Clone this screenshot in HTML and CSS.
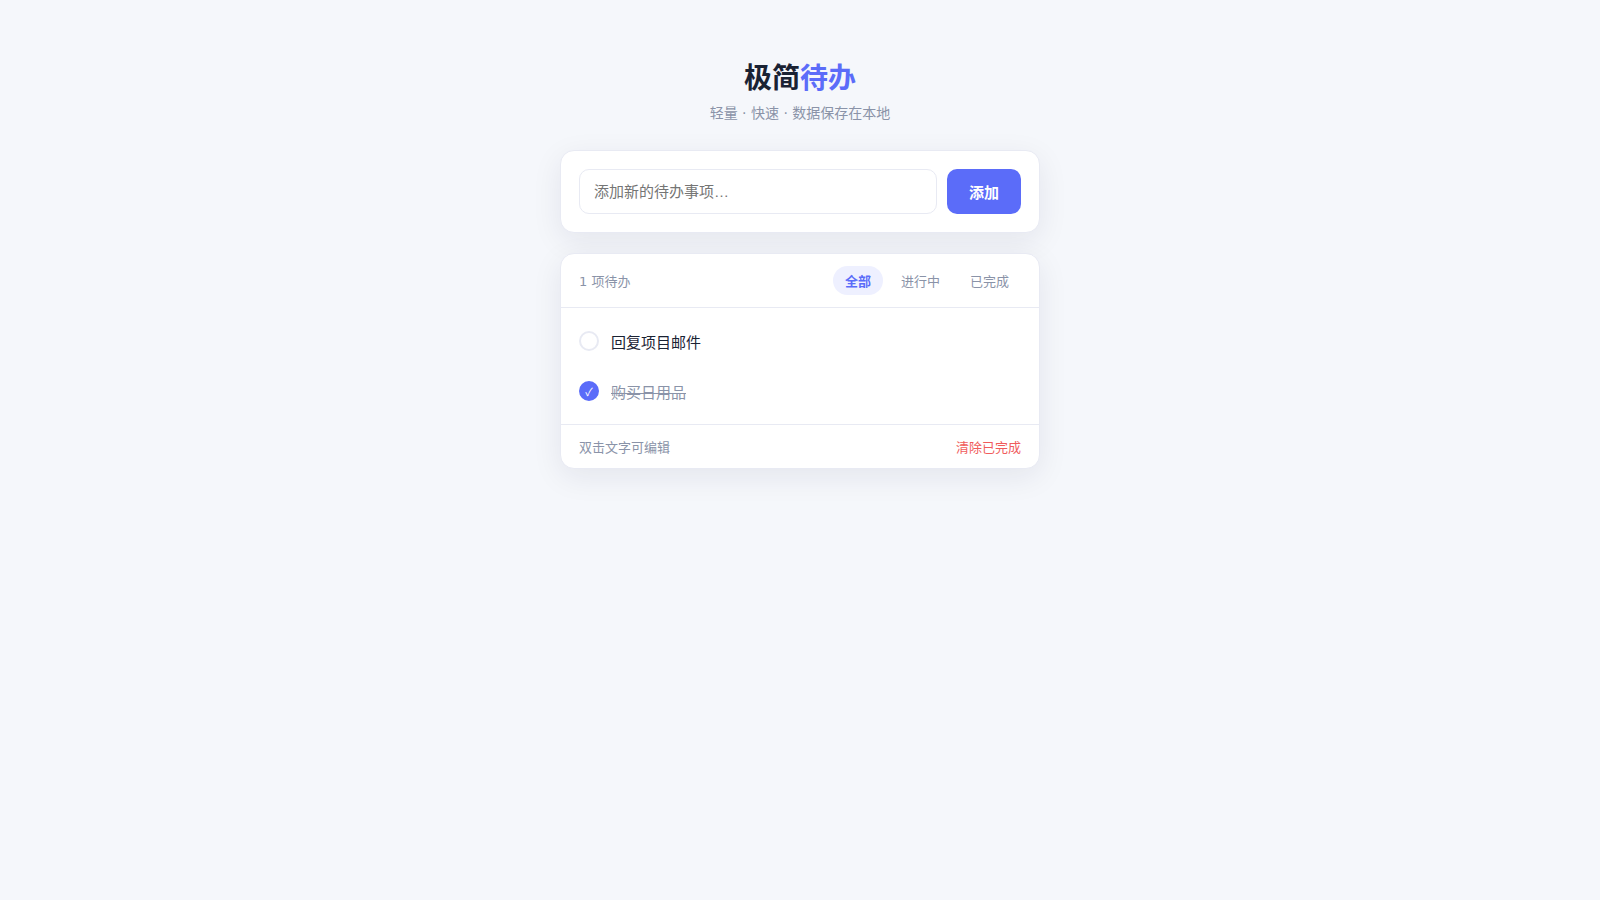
FILE: index.html
```html
<!DOCTYPE html>
<html lang="zh-CN">
<head>
<meta charset="UTF-8">
<meta name="viewport" content="width=device-width, initial-scale=1">
<title>极简待办</title>
<link rel="stylesheet" href="styles.css">
</head>
<body>
<main class="app">
  <header class="header">
    <h1 class="title">极简<span class="accent">待办</span></h1>
    <p class="subtitle">轻量 · 快速 · 数据保存在本地</p>
  </header>

  <form class="card add-form">
    <input class="add-input" type="text" placeholder="添加新的待办事项…" aria-label="添加新的待办事项">
    <button class="add-button" type="button">添加</button>
  </form>

  <section class="card">
    <div class="toolbar">
      <span>1 项待办</span>
      <div class="filters">
        <button class="filter active" type="button">全部</button>
        <button class="filter" type="button">进行中</button>
        <button class="filter" type="button">已完成</button>
      </div>
    </div>
    <ul class="list">
      <li class="item">
        <input class="check" type="checkbox" id="todo-1">
        <label class="text" for="todo-1">回复项目邮件</label>
      </li>
      <li class="item">
        <input class="check" type="checkbox" id="todo-2" checked>
        <label class="text" for="todo-2">购买日用品</label>
      </li>
    </ul>
    <footer class="footer">
      <span>双击文字可编辑</span>
      <button class="clear" type="button">清除已完成</button>
    </footer>
  </section>
</main>
</body>
</html>
```
FILE: styles.css
```css
:root {
  --bg: #f5f7fb;
  --card: #ffffff;
  --text: #1a2233;
  --muted: #8a93a8;
  --primary: #5b6cf9;
  --primary-soft: #eef0ff;
  --line: #e8eaf3;
  --danger: #f05c5c;
}

* {
  box-sizing: border-box;
  margin: 0;
  padding: 0;
}

body {
  min-height: 100vh;
  padding: 56px 16px;
  background: var(--bg);
  color: var(--text);
  font-family: "DejaVu Sans", "Noto Sans CJK SC", sans-serif;
}

button,
input {
  font-family: inherit;
}

button {
  border: none;
  background: none;
  cursor: pointer;
}

.app {
  max-width: 480px;
  margin: 0 auto;
}

.header {
  margin-bottom: 28px;
  text-align: center;
}

.title {
  font-size: 28px;
  font-weight: 700;
}

.accent {
  color: var(--primary);
}

.subtitle {
  margin-top: 6px;
  color: var(--muted);
  font-size: 14px;
}

.card {
  background: var(--card);
  border: 1px solid var(--line);
  border-radius: 14px;
  box-shadow: 0 8px 30px rgba(30, 30, 60, 0.08);
}

.add-form {
  display: flex;
  gap: 10px;
  margin-bottom: 20px;
  padding: 18px;
}

.add-input {
  flex: 1;
  min-width: 0;
  height: 45px;
  padding: 0 14px;
  border: 1px solid var(--line);
  border-radius: 10px;
  color: var(--text);
  font-family: "Liberation Sans", "Noto Sans CJK SC", sans-serif;
  font-size: 15px;
  outline: none;
}

.add-button {
  padding: 0 22px;
  border-radius: 10px;
  background: var(--primary);
  color: #fff;
  font-size: 15px;
  font-weight: 600;
}

.toolbar {
  display: flex;
  align-items: center;
  justify-content: space-between;
  padding: 12px 18px;
  border-bottom: 1px solid var(--line);
  color: var(--muted);
  font-size: 13px;
}

.filters {
  display: flex;
  gap: 6px;
}

.filter {
  padding: 5px 12px;
  border-radius: 20px;
  color: var(--muted);
  font-size: 13px;
}

.filter.active {
  background: var(--primary-soft);
  color: var(--primary);
  font-weight: 600;
}

.list {
  padding: 8px 0;
  list-style: none;
}

.item {
  display: flex;
  align-items: center;
  gap: 12px;
  padding: 14px 18px;
}

.check {
  display: grid;
  place-items: center;
  flex: none;
  width: 20px;
  height: 20px;
  border: 2px solid var(--line);
  border-radius: 50%;
  appearance: none;
  color: #fff;
  font-family: "Noto Sans CJK SC", sans-serif;
  font-size: 11px;
  line-height: 16px;
}

.check:checked {
  border-color: var(--primary);
  background: var(--primary);
}

.check:checked::after {
  content: "✓";
}

.text {
  flex: 1;
  padding-top: 1px;
  font-size: 15px;
}

.check:checked + .text {
  color: var(--muted);
  text-decoration: line-through;
}

.footer {
  display: flex;
  align-items: center;
  justify-content: space-between;
  padding: 12px 18px;
  border-top: 1px solid var(--line);
  color: var(--muted);
  font-size: 13px;
}

.clear {
  color: var(--danger);
  font-size: 13px;
}
```
